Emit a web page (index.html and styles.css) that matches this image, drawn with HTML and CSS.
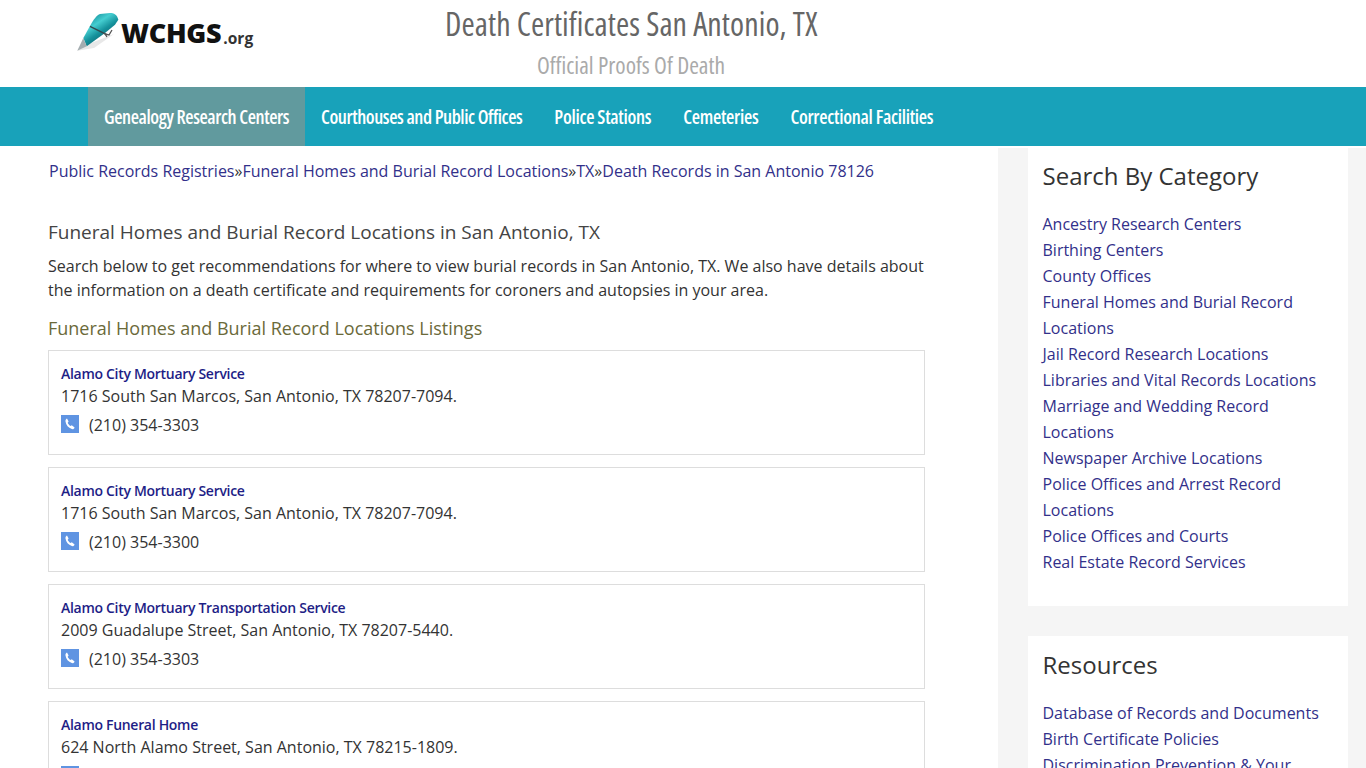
FILE: index.html
```html
<!DOCTYPE html>
<html lang="en">
<head>
  <meta charset="UTF-8" />
  <meta name="viewport" content="width=device-width, initial-scale=1.0"/>
  <title>Death Certificates San Antonio, TX</title>
  <link rel="stylesheet" href="styles.css">
</head>
<body>

  <header class="site-header">
    <a class="logo" href="#">
      <svg class="logo-pen" width="44" height="44" viewBox="0 0 44 44">
        <defs>
          <linearGradient id="penBody" x1="0.25" y1="0.1" x2="0.75" y2="0.8">
            <stop offset="0" stop-color="#1c9aa4"/>
            <stop offset="0.3" stop-color="#45cdd0"/>
            <stop offset="0.6" stop-color="#15929c"/>
            <stop offset="1" stop-color="#0a5c68"/>
          </linearGradient>
        </defs>
        <path d="M1.3 37.7 L18 35 L38 21 L10 32 Z" fill="#e8e8e8"/>
        <path d="M7.3 25 L15.7 10 C18 6 21 2 24 1 L34 0 C38 0 41 1.5 42.3 6.7 L39 11.7 L29 20 L10.7 33.3 Z" fill="url(#penBody)"/>
        <path d="M1.3 37.7 L7.3 25 L10.7 33.3 Z" fill="#a4adb0"/>
        <path d="M14 13.3 L30.7 21.7" stroke="#33484d" stroke-width="1.4" fill="none"/>
        <path d="M36 17 L33 22 L29 21 L31 24" stroke="#555" stroke-width="1.3" fill="none"/>
      </svg>
      <span class="logo-name">WCHGS</span><span class="logo-org">.org</span>
    </a>
    <div class="site-titles">
      <h1>Death Certificates San Antonio, TX</h1>
      <p>Official Proofs Of Death</p>
    </div>
  </header>

  <nav class="main-nav">
    <a class="active" href="#">Genealogy Research Centers</a>
    <a href="#">Courthouses and Public Offices</a>
    <a href="#">Police Stations</a>
    <a href="#">Cemeteries</a>
    <a href="#">Correctional Facilities</a>
  </nav>

  <div class="page">
    <main class="content">
      <div class="breadcrumb">
        <a href="#">Public Records Registries</a>»<a href="#">Funeral Homes and Burial Record Locations</a>»<a href="#">TX</a>»<a href="#">Death Records in San Antonio 78126</a>
      </div>

      <h2>Funeral Homes and Burial Record Locations in San Antonio, TX</h2>
      <p class="intro">Search below to get recommendations for where to view burial records in San Antonio, TX. We also have details about the information on a death certificate and requirements for coroners and autopsies in your area.</p>

      <h3>Funeral Homes and Burial Record Locations Listings</h3>

      <div class="listing">
        <a class="listing-name" href="#">Alamo City Mortuary Service</a>
        <div class="listing-address">1716 South San Marcos, San Antonio, TX 78207-7094.</div>
        <div class="listing-phone">
          <svg class="phone-icon" width="18" height="18" viewBox="0 0 18 18"><rect width="18" height="18" fill="#5f94e2"/><path d="M6 3.6 L7.6 6.6 L6.7 7.7 C7.2 9 8.2 10.2 9.6 11 L10.8 10.2 L13.6 12.4 C13.2 13.7 12 14.5 10.8 14.1 C7.4 13 5 10.2 4.5 6.6 C4.3 5.2 4.9 4 6 3.6 Z" fill="#fff"/></svg>
          (210) 354-3303
        </div>
      </div>

      <div class="listing">
        <a class="listing-name" href="#">Alamo City Mortuary Service</a>
        <div class="listing-address">1716 South San Marcos, San Antonio, TX 78207-7094.</div>
        <div class="listing-phone">
          <svg class="phone-icon" width="18" height="18" viewBox="0 0 18 18"><rect width="18" height="18" fill="#5f94e2"/><path d="M6 3.6 L7.6 6.6 L6.7 7.7 C7.2 9 8.2 10.2 9.6 11 L10.8 10.2 L13.6 12.4 C13.2 13.7 12 14.5 10.8 14.1 C7.4 13 5 10.2 4.5 6.6 C4.3 5.2 4.9 4 6 3.6 Z" fill="#fff"/></svg>
          (210) 354-3300
        </div>
      </div>

      <div class="listing">
        <a class="listing-name" href="#">Alamo City Mortuary Transportation Service</a>
        <div class="listing-address">2009 Guadalupe Street, San Antonio, TX 78207-5440.</div>
        <div class="listing-phone">
          <svg class="phone-icon" width="18" height="18" viewBox="0 0 18 18"><rect width="18" height="18" fill="#5f94e2"/><path d="M6 3.6 L7.6 6.6 L6.7 7.7 C7.2 9 8.2 10.2 9.6 11 L10.8 10.2 L13.6 12.4 C13.2 13.7 12 14.5 10.8 14.1 C7.4 13 5 10.2 4.5 6.6 C4.3 5.2 4.9 4 6 3.6 Z" fill="#fff"/></svg>
          (210) 354-3303
        </div>
      </div>

      <div class="listing">
        <a class="listing-name" href="#">Alamo Funeral Home</a>
        <div class="listing-address">624 North Alamo Street, San Antonio, TX 78215-1809.</div>
        <div class="listing-phone">
          <svg class="phone-icon" width="18" height="18" viewBox="0 0 18 18"><rect width="18" height="18" fill="#5f94e2"/><path d="M6 3.6 L7.6 6.6 L6.7 7.7 C7.2 9 8.2 10.2 9.6 11 L10.8 10.2 L13.6 12.4 C13.2 13.7 12 14.5 10.8 14.1 C7.4 13 5 10.2 4.5 6.6 C4.3 5.2 4.9 4 6 3.6 Z" fill="#fff"/></svg>
          (210) 354-3303
        </div>
      </div>
    </main>

    <aside class="sidebar">
      <div class="widget">
        <h4>Search By Category</h4>
        <ul>
          <li><a href="#">Ancestry Research Centers</a></li>
          <li><a href="#">Birthing Centers</a></li>
          <li><a href="#">County Offices</a></li>
          <li><a href="#">Funeral Homes and Burial Record Locations</a></li>
          <li><a href="#">Jail Record Research Locations</a></li>
          <li><a href="#">Libraries and Vital Records Locations</a></li>
          <li><a href="#">Marriage and Wedding Record Locations</a></li>
          <li><a href="#">Newspaper Archive Locations</a></li>
          <li><a href="#">Police Offices and Arrest Record Locations</a></li>
          <li><a href="#">Police Offices and Courts</a></li>
          <li><a href="#">Real Estate Record Services</a></li>
        </ul>
      </div>
      <div class="widget">
        <h4>Resources</h4>
        <ul>
          <li><a href="#">Database of Records and Documents</a></li>
          <li><a href="#">Birth Certificate Policies</a></li>
          <li><a href="#">Discrimination Prevention &amp; Your Rights</a></li>
        </ul>
      </div>
    </aside>
  </div>

</body>
</html>
```

FILE: styles.css
```css
html, body {
  height: 768px;
  overflow: hidden;
}
body {
  margin: 0;
  font-family: "Open Sans", sans-serif;
  font-size: 16px;
  color: #333;
  background: #fff;
}
a {
  color: #32308a;
  text-decoration: none;
}

/* Header */
.site-header {
  height: 87px;
  display: flex;
}
.logo {
  width: 445px;
  padding: 13px 0 0 76px;
  box-sizing: border-box;
  display: flex;
  align-items: flex-start;
  color: #111;
}
.logo-pen {
  flex: none;
}
.logo-name {
  margin: 1px 0 0 1px;
  font-size: 27px;
  line-height: 38px;
  font-weight: 800;
  letter-spacing: -0.3px;
}
.logo-org {
  margin: 13px 0 0 2px;
  font-size: 15.5px;
  line-height: 24px;
  font-weight: 700;
  color: #333;
}
.site-titles {
  width: 372px;
  text-align: center;
  font-stretch: 75%;
}
.site-titles h1 {
  margin: 4px 0 0;
  font-size: 32px;
  line-height: 40px;
  font-weight: 500;
  letter-spacing: 0.08px;
  color: #666;
  white-space: nowrap;
}
.site-titles p {
  margin: 6px 0 0;
  font-size: 23.5px;
  line-height: 30px;
  font-weight: 500;
  color: #aaa;
}

/* Nav */
.main-nav {
  height: 59px;
  padding-left: 88px;
  display: flex;
  background: #18a2ba;
}
.main-nav a {
  padding: 0 16px;
  font-stretch: 75%;
  font-size: 19px;
  font-weight: 600;
  letter-spacing: -0.42px;
  line-height: 60px;
  color: #fff;
}
.main-nav a + a + a {
  letter-spacing: -0.28px;
}
.main-nav a.active {
  background: #619a9e;
}

/* Page columns */
.page {
  display: flex;
  margin-top: 2px;
}
.content {
  width: 998px;
  box-sizing: border-box;
  padding: 11px 73px 0 48px;
}
.breadcrumb {
  padding-left: 1px;
  line-height: 24px;
}
h2 {
  margin: 36px 0 0;
  font-size: 19px;
  line-height: 26px;
  font-weight: normal;
  color: #444;
}
.intro {
  margin: 9px 0 0;
  line-height: 24px;
}
h3 {
  margin: 13px 0 0;
  font-size: 18px;
  line-height: 26px;
  font-weight: normal;
  color: #6b6a3a;
}
.listing {
  height: 105px;
  box-sizing: border-box;
  margin: 9px 0 12px;
  padding: 13px 12px 0;
  border: 1px solid #ddd;
}
.listing + .listing {
  margin-top: 0;
}
.listing-name {
  display: block;
  font-size: 14px;
  line-height: 20px;
  font-weight: 600;
  color: #1e1e86;
  letter-spacing: -0.3px;
}
.listing-address {
  line-height: 24px;
  color: #333;
}
.listing-phone {
  margin-top: 5px;
  display: flex;
  align-items: flex-start;
  gap: 10px;
  line-height: 24px;
  color: #333;
}
.phone-icon {
  flex: none;
  margin-top: 2px;
}

/* Sidebar */
.sidebar {
  width: 368px;
  box-sizing: border-box;
  padding: 0 18px 0 30px;
  background: #f5f5f5;
}
.widget {
  padding: 12px 14.5px 31px;
  margin-bottom: 30px;
  background: #fff;
}
.widget:first-child {
  margin-top: -1px;
}
.widget h4 {
  margin: 0 0 19px;
  font-size: 24px;
  line-height: 33px;
  font-weight: normal;
  color: #333;
}
.widget ul {
  margin: 0;
  padding: 0;
  list-style: none;
}
.widget li {
  line-height: 26px;
}
```
